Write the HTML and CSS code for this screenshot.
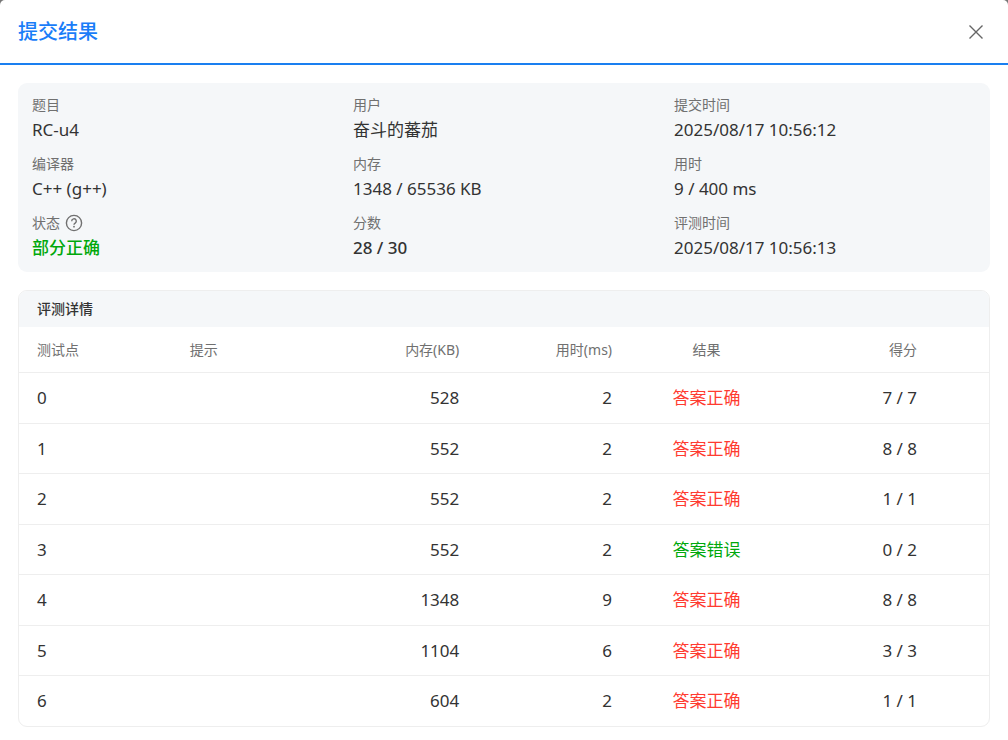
FILE: index.html
```
<!DOCTYPE html>
<html lang="zh-CN">
<head>
<meta charset="utf-8">
<meta name="viewport" content="width=device-width, initial-scale=1">
<title>提交结果</title>
<link rel="stylesheet" href="styles.css">
</head>
<body>
<main class="dialog">
  <header class="dialog-header">
    <h1 class="dialog-title">提交结果</h1>
    <button class="close" type="button" aria-label="关闭">
      <svg width="16" height="16" viewBox="0 0 16 16" fill="none" stroke="currentColor" stroke-width="1.4"><path d="M1.5 1.5l13 13M14.5 1.5l-13 13"/></svg>
    </button>
  </header>
  <div class="dialog-body">
    <dl class="summary">
      <div><dt>题目</dt><dd>RC-u4</dd></div>
      <div><dt>用户</dt><dd>奋斗的蕃茄</dd></div>
      <div><dt>提交时间</dt><dd>2025/08/17 10:56:12</dd></div>
      <div><dt>编译器</dt><dd>C++ (g++)</dd></div>
      <div><dt>内存</dt><dd>1348 / 65536 KB</dd></div>
      <div><dt>用时</dt><dd>9 / 400 ms</dd></div>
      <div>
        <dt>状态
          <svg class="help" width="18" height="18" viewBox="0 0 18 18" fill="none" stroke="currentColor" stroke-width="1.4"><circle cx="9" cy="9" r="7.6"/><path d="M6.7 7.2a2.3 2.3 0 1 1 3.5 1.9c-.8.5-1.2.8-1.2 1.7"/><circle cx="9" cy="12.7" r=".9" fill="currentColor" stroke="none"/></svg>
        </dt>
        <dd class="ok">部分正确</dd>
      </div>
      <div><dt>分数</dt><dd class="score">28 / 30</dd></div>
      <div><dt>评测时间</dt><dd>2025/08/17 10:56:13</dd></div>
    </dl>
    <section class="details">
      <h2 class="details-title">评测详情</h2>
      <table class="cases">
        <thead>
          <tr><th>测试点</th><th>提示</th><th class="num">内存(KB)</th><th class="num">用时(ms)</th><th class="result">结果</th><th class="points">得分</th></tr>
        </thead>
        <tbody>
          <tr><td>0</td><td></td><td class="num">528</td><td class="num">2</td><td class="result right">答案正确</td><td class="points">7 / 7</td></tr>
          <tr><td>1</td><td></td><td class="num">552</td><td class="num">2</td><td class="result right">答案正确</td><td class="points">8 / 8</td></tr>
          <tr><td>2</td><td></td><td class="num">552</td><td class="num">2</td><td class="result right">答案正确</td><td class="points">1 / 1</td></tr>
          <tr><td>3</td><td></td><td class="num">552</td><td class="num">2</td><td class="result wrong">答案错误</td><td class="points">0 / 2</td></tr>
          <tr><td>4</td><td></td><td class="num">1348</td><td class="num">9</td><td class="result right">答案正确</td><td class="points">8 / 8</td></tr>
          <tr><td>5</td><td></td><td class="num">1104</td><td class="num">6</td><td class="result right">答案正确</td><td class="points">3 / 3</td></tr>
          <tr><td>6</td><td></td><td class="num">604</td><td class="num">2</td><td class="result right">答案正确</td><td class="points">1 / 1</td></tr>
        </tbody>
      </table>
    </section>
  </div>
</main>
</body>
</html>
```
FILE: styles.css
```
* {
  box-sizing: border-box;
}

body {
  margin: 0;
  background: #777;
  color: #333;
  font: 17px/28px "Noto Sans", "Noto Sans CJK SC", sans-serif;
}

.dialog {
  min-height: 100vh;
  background: #fff;
  border-radius: 5px 5px 0 0;
}

.dialog-header {
  display: flex;
  align-items: center;
  justify-content: space-between;
  padding: 16px 22px 15px 18px;
  border-bottom: 2px solid #1a7ff0;
}

.dialog-title {
  margin: 0;
  color: #1a7df8;
  font-size: 20px;
  font-weight: 500;
  line-height: 32px;
}

.close {
  display: flex;
  padding: 2px;
  border: 0;
  background: none;
  color: #666;
  cursor: pointer;
}

.dialog-body {
  padding: 18px 18px 13px;
}

.summary {
  display: grid;
  grid-template-columns: repeat(3, 1fr);
  gap: 9px 19px;
  margin: 0 0 18px;
  padding: 11px 14px 10px;
  border-radius: 9px;
  background: #f5f7f9;
}

.summary dt {
  display: flex;
  align-items: center;
  gap: 5px;
  color: #707070;
  font-size: 14px;
  line-height: 22px;
}

.summary dd {
  margin: 0;
}

.summary .ok {
  color: #00a80b;
  font-weight: 500;
}

.summary .score {
  font-weight: 500;
}

.details {
  overflow: hidden;
  border: 1px solid #eee;
  border-radius: 9px;
}

.details-title {
  margin: 0;
  padding: 0 18px;
  background: #f5f7f9;
  font-size: 14px;
  font-weight: 500;
  line-height: 36px;
}

.cases {
  width: 100%;
  table-layout: fixed;
  border-collapse: separate;
  border-spacing: 0;
}

.cases th,
.cases td {
  width: 15.75%;
  padding: 0 18px;
  text-align: left;
}

.cases th {
  height: 46px;
  border-bottom: 1px solid #eee;
  color: #707070;
  font-size: 14px;
  font-weight: 400;
}

.cases td {
  height: 51px;
  border-bottom: 1px solid #eee;
}

.cases tr:nth-child(even) td {
  height: 50px;
}

.cases tbody tr:last-child td {
  height: 50px;
  border-bottom: 0;
}

.cases .num {
  text-align: right;
}

.cases .result {
  text-align: center;
}

.cases .points {
  width: auto;
  padding-right: 72px;
  text-align: right;
}

.right {
  color: #ff3b30;
}

.wrong {
  color: #00a80b;
}
```
